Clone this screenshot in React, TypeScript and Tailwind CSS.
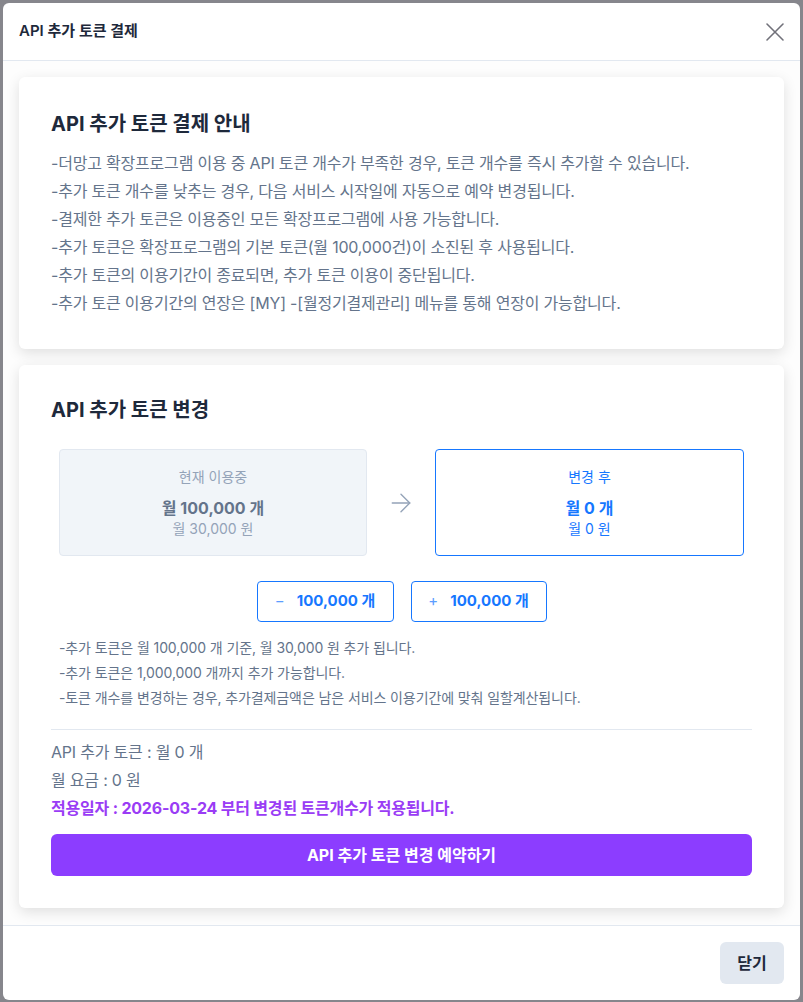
import React from 'react';
import { ArrowRight } from 'lucide-react';

const guide = [
  '더망고 확장프로그램 이용 중 API 토큰 개수가 부족한 경우, 토큰 개수를 즉시 추가할 수 있습니다.',
  '추가 토큰 개수를 낮추는 경우, 다음 서비스 시작일에 자동으로 예약 변경됩니다.',
  '결제한 추가 토큰은 이용중인 모든 확장프로그램에 사용 가능합니다.',
  '추가 토큰은 확장프로그램의 기본 토큰(월 100,000건)이 소진된 후 사용됩니다.',
  '추가 토큰의 이용기간이 종료되면, 추가 토큰 이용이 중단됩니다.',
  '추가 토큰 이용기간의 연장은 [MY] -[월정기결제관리] 메뉴를 통해 연장이 가능합니다.',
];

const notes = [
  '추가 토큰은 월 100,000 개 기준, 월 30,000 원 추가 됩니다.',
  '추가 토큰은 1,000,000 개까지 추가 가능합니다.',
  '토큰 개수를 변경하는 경우, 추가결제금액은 남은 서비스 이용기간에 맞춰 일할계산됩니다.',
];

export default function App() {
  return (
    <div
      className="min-h-screen bg-[#86868c] p-[3px]"
      style={{ fontFamily: 'Inter, "Noto Sans CJK KR", sans-serif' }}
    >
      <div className="bg-white rounded-md h-[997px] flex flex-col overflow-hidden">
        {/* header */}
        <div className="h-[58px] shrink-0 flex items-center justify-between px-4 border-b border-[#e2e8f0]">
          <h2 className="text-[15px] font-semibold text-[#1e293b]">API 추가 토큰 결제</h2>
          <svg width="20" height="20" viewBox="0 0 20 20" className="text-[#71717a] mr-[-1px]">
            <path d="M2 2 L18 18 M18 2 L2 18" stroke="currentColor" strokeWidth="1.6" strokeLinecap="round" fill="none" />
          </svg>
        </div>

        {/* body */}
        <div className="flex-1 flex flex-col gap-4 px-4 py-4 bg-[#fdfdfd]">
          <div className="bg-white rounded-md shadow-[0_4px_14px_rgba(0,0,0,0.12)] px-8 pt-8 pb-8">
            <h3 className="text-[20px] leading-[30px] font-bold text-[#1e293b]">API 추가 토큰 결제 안내</h3>
            <ul className="mt-2.5 text-[16px] leading-[28px] text-[#64748b] tracking-[-0.2px]">
              {guide.map((g, i) => (
                <li key={i}>-{g}</li>
              ))}
            </ul>
          </div>

          <div className="bg-white rounded-md shadow-[0_4px_14px_rgba(0,0,0,0.12)] px-8 pt-8 pb-8">
            <h3 className="text-[20px] leading-[26px] font-bold text-[#1e293b]">API 추가 토큰 변경</h3>

            <div className="mt-[26px] px-2 flex items-center justify-between">
              <div className="w-[308px] h-[107px] rounded border border-[#e2e8f0] bg-[#f1f5f9] flex flex-col items-center justify-center text-center">
                <p className="text-[14px] leading-5 text-[#94a3b8]">현재 이용중</p>
                <p className="mt-2.5 text-[16px] leading-[22px] font-bold text-[#64748b]">월 100,000 개</p>
                <p className="text-[14px] leading-5 text-[#94a3b8]">월 30,000 원</p>
              </div>
              <ArrowRight size={30} strokeWidth={1.1} className="text-[#94a3b8]" />
              <div className="w-[309px] h-[107px] rounded border border-[#1677ff] bg-white flex flex-col items-center justify-center text-center">
                <p className="text-[14px] leading-5 text-[#1677ff]">변경 후</p>
                <p className="mt-2.5 text-[16px] leading-[22px] font-bold text-[#1677ff]">월 0 개</p>
                <p className="text-[14px] leading-5 text-[#1677ff]">월 0 원</p>
              </div>
            </div>

            <div className="mt-[25px] flex justify-center gap-[17px]">
              <button className="w-[137px] h-[41px] rounded border border-[#1677ff] bg-white text-[#1677ff] text-[15px] font-bold flex items-center justify-center gap-3">
                <span className="font-normal text-[#5c9dff]">−</span>
                <span>100,000 개</span>
              </button>
              <button className="w-[136px] h-[41px] rounded border border-[#1677ff] bg-white text-[#1677ff] text-[15px] font-bold flex items-center justify-center gap-3">
                <span className="font-normal text-[#5c9dff]">+</span>
                <span>100,000 개</span>
              </button>
            </div>

            <ul className="mt-[13px] px-2 text-[14px] leading-[25px] text-[#64748b] tracking-[-0.1px]">
              {notes.map((n, i) => (
                <li key={i}>-{n}</li>
              ))}
            </ul>

            <div className="mt-[19px] border-t border-[#e2e8f0]" />

            <div className="mt-[8px] text-[16px] leading-[28px] text-[#64748b] tracking-[-0.2px]">
              <p>API 추가 토큰 : 월 0 개</p>
              <p>월 요금 : 0 원</p>
              <p className="font-bold text-[#9a3cf5]">적용일자 : 2026-03-24 부터 변경된 토큰개수가 적용됩니다.</p>
            </div>

            <button className="mt-3 w-full h-[42px] rounded-md bg-[#8c3dff] text-white text-[16px] font-bold">
              API 추가 토큰 변경 예약하기
            </button>
          </div>
        </div>

        {/* footer */}
        <div className="shrink-0 border-t border-[#e2e8f0] flex justify-end px-4 pt-4 pb-4">
          <button className="w-16 h-[42px] rounded-md bg-[#e2e8f0] text-[16px] font-bold text-[#1e293b]">닫기</button>
        </div>
      </div>
    </div>
  );
}
